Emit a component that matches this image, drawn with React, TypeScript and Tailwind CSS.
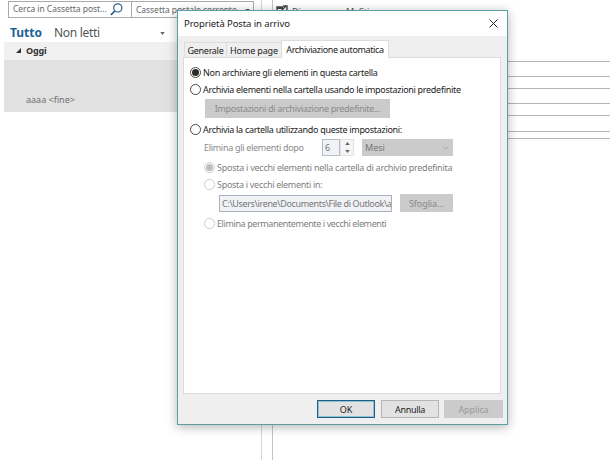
import type { ReactNode } from "react";

function Radio({ checked = false, disabled = false }: { checked?: boolean; disabled?: boolean }) {
  return (
    <span
      className={
        "flex size-[11px] shrink-0 items-center justify-center rounded-full border bg-white " +
        (disabled ? "border-[#cccccc]" : "border-[#484848]")
      }
    >
      {checked && (
        <span className={"size-[7px] rounded-full " + (disabled ? "bg-[#bdbdbd]" : "bg-[#2b2b2b]")} />
      )}
    </span>
  );
}

function Option({
  checked,
  disabled,
  className = "",
  children,
}: {
  checked?: boolean;
  disabled?: boolean;
  className?: string;
  children: ReactNode;
}) {
  return (
    <div className={"flex h-[12px] items-center gap-[2px] " + (disabled ? "text-[#808080] " : "text-[#222] ") + className}>
      <Radio checked={checked} disabled={disabled} />
      <span>{children}</span>
    </div>
  );
}

function Mailbox() {
  return (
    <div className="flex h-full">
      <aside className="w-[262px] shrink-0 border-r border-[#d4d4d4] pt-px">
        <div className="ml-[8px] flex h-[17px] w-[246px] border border-[#ababab] text-[8.5px] text-[#666]">
          <div className="flex w-[123px] items-center justify-between border-r border-[#ababab] pl-[4px] pr-[8px]">
            <span className="tracking-[-0.04px]">Cerca in Cassetta post...</span>
            <svg viewBox="0 0 14 14" className="size-[13px]" fill="none" stroke="#2a5f8c" strokeWidth="1.3">
              <circle cx="8.4" cy="5.3" r="4.4" />
              <path d="M5.2 8.6 1 12.8" strokeWidth="1.8" />
            </svg>
          </div>
          <div className="flex flex-1 items-center justify-between pl-[4px] pr-[3px] pt-px">
            <span className="tracking-[-0.04px]">Cassetta postale corrente</span>
            <svg viewBox="0 0 6 4" className="h-[3px] w-[5px]" fill="#555"><path d="M0 0h6L3 4z" /></svg>
          </div>
        </div>
        <div className="flex h-[24px] items-center pl-[10px] pr-[96px] pt-[6px] text-[12px] text-[#555]">
          <span className="font-bold text-[#1c6296]">Tutto</span>
          <span className="ml-[12px] flex-1 tracking-[-0.3px]">Non letti</span>
          <svg viewBox="0 0 6 4" className="h-[3px] w-[5px]" fill="#666"><path d="M0 0h6L3 4z" /></svg>
        </div>
        <div className="ml-[4px] flex h-[18px] items-center bg-[#f0f0f0] pb-px pl-[12px] text-[9px] font-bold text-[#333]">
          <svg viewBox="0 0 5 5" className="mr-[5px] size-[5px]" fill="#333"><path d="M5 0v5H0z" /></svg>
          <span className="tracking-[-0.2px]">Oggi</span>
        </div>
        <div className="ml-[4px] flex h-[52px] items-end bg-[#e1e1e1] pb-[8px] pl-[22px] text-[9px] text-[#707070]">
          aaaa &lt;fine&gt;
        </div>
      </aside>
      <main className="ml-[10px] flex-1 border-l border-[#c4c4c4]">
        <div className="flex h-[20px] items-center pl-[3px] text-[9px] text-[#555]">
          <svg viewBox="0 0 12 10" className="h-[10px] w-[12px]" fill="none" stroke="#444" strokeWidth="1.4">
            <path d="M7 2H1v7h8V6M1 3.2h6M5 6l5-5M7 1h4v4" />
          </svg>
          <span className="ml-[4px] w-[54px] pt-[2px]">Dis</span>
          <span className="pt-[2px]">M. Sti...</span>
        </div>
        <div className="h-[42px] border-b border-[#b5b5b5]" />
        <div className="h-[15px] border-b border-[#b5b5b5]" />
        <div className="h-[12px] border-b border-[#b5b5b5]" />
        <div className="h-[15px] border-b border-[#b5b5b5]" />
        <div className="h-[12px] border-b border-[#b5b5b5]" />
        <div className="h-[16px] border-b border-[#b5b5b5]" />
        <div className="h-[7px] border-b border-[#b5b5b5]" />
      </main>
    </div>
  );
}

function PropertiesDialog() {
  return (
    <section className="absolute left-[177px] top-[10px] flex h-[415px] w-[331px] flex-col border border-[#5b9fa3] bg-[#efefef] text-[9px] tracking-[-0.3px] shadow-[0_2px_10px_rgba(0,0,0,0.3)]">
      <header className="flex h-[25px] items-center justify-between bg-white pl-[6px] pr-[9px] text-[#222]">
        <span className="text-[9.5px] tracking-[-0.1px]">Proprietà Posta in arrivo</span>
        <svg viewBox="0 0 9 9" className="size-[9px]" stroke="#222" strokeWidth="1"><path d="m.5.5 8 8m0-8-8 8" /></svg>
      </header>
      <nav className="flex h-[21px] items-end pl-[6px] text-[#222]">
        <div className="flex h-[15px] w-[43px] items-center justify-center border border-b-0 border-[#dcdcdc] pt-px">Generale</div>
        <div className="flex h-[15px] w-[54px] items-center justify-center border-t border-[#dcdcdc] pt-px tracking-[-0.15px]">Home page</div>
        <div className="z-10 -mb-px flex h-[18px] w-[108px] items-center justify-center border border-b-0 border-[#dcdcdc] bg-white pb-px tracking-[-0.36px]">
          Archiviazione automatica
        </div>
      </nav>
      <div className="ml-[5px] mr-[6px] flex h-[337px] flex-col border border-[#dcdcdc] bg-white pl-[6px] pt-[8px]">
        <Option checked>Non archiviare gli elementi in questa cartella</Option>
        <Option className="mt-[5px]">Archivia elementi nella cartella usando le impostazioni predefinite</Option>
        <div className="ml-[15px] mt-[4px] flex h-[19px] w-[185px] items-center justify-center bg-[#cbcbcb] text-[#8a8a8a]">
          Impostazioni di archiviazione predefinite...
        </div>
        <Option className="mt-[5px]">Archivia la cartella utilizzando queste impostazioni:</Option>
        <div className="ml-[14px] mt-[4px] flex h-[17px] items-center text-[#8a8a8a]">
          <span className="w-[118px]">Elimina gli elementi dopo</span>
          <span className="flex h-[17px] w-[18px] items-center border border-[#b6bdc8] bg-[#f0f2f5] pl-[2px] text-[#777]">6</span>
          <span className="flex h-[17px] w-[14px] flex-col items-center justify-around border border-[#e2e2e2] bg-[#f5f5f5]">
            <svg viewBox="0 0 6 4" className="h-[3px] w-[5px]" fill="#666"><path d="M0 4h6L3 0z" /></svg>
            <svg viewBox="0 0 6 4" className="h-[3px] w-[5px]" fill="#666"><path d="M0 0h6L3 4z" /></svg>
          </span>
          <span className="ml-[8px] flex h-[17px] w-[91px] items-center justify-between bg-[#cbcbcb] pl-[3px] pr-[4px] tracking-normal text-[#777]">
            Mesi
            <svg viewBox="0 0 6 4" className="h-[4px] w-[6px]" fill="none" stroke="#aaa"><path d="m.3.3 2.7 3 2.7-3" /></svg>
          </span>
        </div>
        <Option checked disabled className="ml-[14px] mt-[5px] tracking-[-0.26px]">Sposta i vecchi elementi nella cartella di archivio predefinita</Option>
        <Option disabled className="ml-[14px] mt-[5px]">Sposta i vecchi elementi in:</Option>
        <div className="ml-[29px] mt-[4px] flex h-[18px] items-center text-[#777]">
          <span className="h-[17px] w-[173px] overflow-hidden whitespace-nowrap border border-[#a9b1bf] bg-[#f0f2f5] pl-[2px] leading-[15px] tracking-[-0.36px]">
            C:\Users\irene\Documents\File di Outlook\a
          </span>
          <span className="ml-[8px] flex h-[18px] w-[53px] items-center justify-center bg-[#cbcbcb] tracking-[-0.1px] text-[#8a8a8a]">Sfoglia...</span>
        </div>
        <Option disabled className="ml-[14px] mt-[5px] tracking-[-0.4px]">Elimina permanentemente i vecchi elementi</Option>
      </div>
      <footer className="flex flex-1 items-center justify-end pr-[4px] tracking-[-0.1px] text-[#222]">
        <div className="flex h-[18px] w-[58px] items-center justify-center border border-[#1f5f82] bg-[#e2e2e2] shadow-[inset_0_0_0_1px_#8fc0d8]">OK</div>
        <div className="ml-[6px] flex h-[18px] w-[58px] items-center justify-center border border-[#b4b4b4] bg-[#e2e2e2] tracking-[-0.3px]">Annulla</div>
        <div className="ml-[5px] flex h-[18px] w-[59px] items-center justify-center bg-[#cbcbcb] text-[#9a9a9a]">Applica</div>
      </footer>
    </section>
  );
}

export default function App() {
  return (
    <div className="relative h-[460px] w-[610px] overflow-hidden whitespace-nowrap bg-white font-['Noto_Sans',sans-serif] leading-none">
      <Mailbox />
      <PropertiesDialog />
    </div>
  );
}
